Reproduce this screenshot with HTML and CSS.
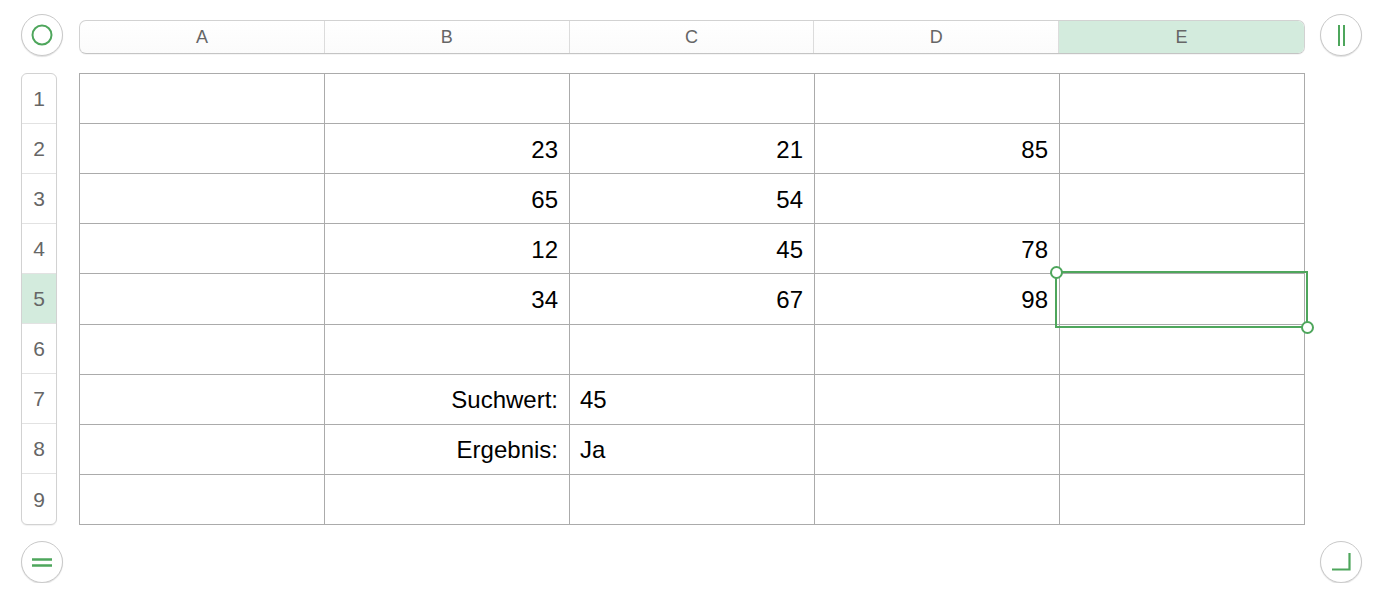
FILE: index.html
```html
<!DOCTYPE html>
<html lang="de">
<head>
<meta charset="utf-8">
<title>Tabelle</title>
<link rel="stylesheet" href="styles.css">
</head>
<body>
<div class="sheet">
  <div class="btn btn-tl">
    <svg width="42" height="42" viewBox="0 0 42 42"><circle cx="21" cy="21" r="9.5" fill="none" stroke="#4ea65c" stroke-width="2"/></svg>
  </div>
  <div class="colhead">
    <div class="ch">A</div>
    <div class="ch">B</div>
    <div class="ch">C</div>
    <div class="ch">D</div>
    <div class="ch ch-sel">E</div>
  </div>
  <div class="btn btn-tr">
    <svg width="42" height="42" viewBox="0 0 42 42"><path d="M19 11V32M24 11V32" stroke="#4ea65c" stroke-width="2" fill="none"/></svg>
  </div>

  <div class="rowhead">
    <div class="rh">1</div>
    <div class="rh">2</div>
    <div class="rh">3</div>
    <div class="rh">4</div>
    <div class="rh rh-sel">5</div>
    <div class="rh">6</div>
    <div class="rh">7</div>
    <div class="rh">8</div>
    <div class="rh">9</div>
  </div>
  <div class="tablewrap">
    <div class="grid">
      <div class="c"></div><div class="c"></div><div class="c"></div><div class="c"></div><div class="c"></div>
      <div class="c"></div><div class="c r">23</div><div class="c r">21</div><div class="c r">85</div><div class="c"></div>
      <div class="c"></div><div class="c r">65</div><div class="c r">54</div><div class="c"></div><div class="c"></div>
      <div class="c"></div><div class="c r">12</div><div class="c r">45</div><div class="c r">78</div><div class="c"></div>
      <div class="c"></div><div class="c r">34</div><div class="c r">67</div><div class="c r">98</div><div class="c"></div>
      <div class="c"></div><div class="c"></div><div class="c"></div><div class="c"></div><div class="c"></div>
      <div class="c"></div><div class="c r">Suchwert:</div><div class="c l">45</div><div class="c"></div><div class="c"></div>
      <div class="c"></div><div class="c r">Ergebnis:</div><div class="c l">Ja</div><div class="c"></div><div class="c"></div>
      <div class="c"></div><div class="c"></div><div class="c"></div><div class="c"></div><div class="c"></div>
    </div>
    <div class="selection">
      <span class="handle handle-tl"></span>
      <span class="handle handle-br"></span>
    </div>
  </div>

  <div class="btn btn-bl">
    <svg width="42" height="42" viewBox="0 0 42 42"><path d="M11 18.5H31M11 24.5H31" stroke="#4ea65c" stroke-width="2.4" fill="none"/></svg>
  </div>
  <div class="btn btn-br">
    <svg width="42" height="42" viewBox="0 0 42 42"><path d="M29.5 12V28.5H12" stroke="#4ea65c" stroke-width="2.2" fill="none"/></svg>
  </div>
</div>
</body>
</html>
```

FILE: styles.css
```css
* { box-sizing: border-box; }
html, body {
  margin: 0;
  padding: 0;
  background: #ffffff;
  font-family: "Liberation Sans", Arial, Helvetica, sans-serif;
}
.sheet {
  display: grid;
  grid-template-columns: 42px 16px 1226px 15px 42px;
  grid-template-rows: 42px 17px 452px 16px 42px;
  padding: 14px 0 0 21px;
}
.btn {
  width: 42px;
  height: 42px;
  border-radius: 50%;
  border: 1px solid #c9c9c9;
  background: #fff;
  box-shadow: 0 1px 1px rgba(0,0,0,0.12);
  position: relative;
}
.btn svg { position: absolute; left: -1px; top: -1px; }
.btn-tl { grid-column: 1; grid-row: 1; }
.btn-tr { grid-column: 5; grid-row: 1; }
.btn-bl { grid-column: 1; grid-row: 5; }
.btn-br { grid-column: 5; grid-row: 5; }

.colhead {
  grid-column: 3;
  grid-row: 1;
  margin-top: 6px;
  height: 34px;
  display: grid;
  grid-template-columns: repeat(5, 1fr);
  border: 1px solid #d2d2d2;
  border-bottom-color: #c4c4c4;
  border-radius: 7px;
  background: linear-gradient(#ffffff, #fbfbfb);
  overflow: hidden;
  box-shadow: 0 1px 0 rgba(0,0,0,0.04);
}
.ch {
  display: flex;
  align-items: center;
  justify-content: center;
  font-size: 18px;
  color: #666;
  border-right: 1px solid #dcdcdc;
  padding-top: 1px;
}
.ch:last-child { border-right: none; }
.ch-sel { background: #d3ebdd; }

.rowhead {
  grid-column: 1;
  grid-row: 3;
  width: 36px;
  display: grid;
  grid-template-rows: repeat(9, 1fr);
  border: 1px solid #d2d2d2;
  border-radius: 6px;
  overflow: hidden;
  background: #fff;
  box-shadow: 0 1px 1px rgba(0,0,0,0.06);
  height: 452px;
}
.rh {
  display: flex;
  align-items: center;
  justify-content: center;
  font-size: 21px;
  color: #666;
  border-bottom: 1px solid #e2e2e2;
  padding-top: 1px;
}
.rh:last-child { border-bottom: none; }
.rh-sel { background: #d3ebdd; }

.tablewrap {
  grid-column: 3;
  grid-row: 3;
  position: relative;
}
.grid {
  display: grid;
  grid-template-columns: repeat(5, 1fr);
  grid-template-rows: repeat(9, 1fr);
  border-left: 1px solid #ababab;
  border-top: 1px solid #ababab;
  width: 1226px;
  height: 452px;
}
.c {
  border-right: 1px solid #ababab;
  border-bottom: 1px solid #ababab;
  display: flex;
  align-items: center;
  font-size: 24px;
  color: #000;
  padding: 2px 11px 0 10px;
}
.c.r { justify-content: flex-end; }
.c.l { justify-content: flex-start; }

.selection {
  position: absolute;
  left: 976px;
  top: 198px;
  width: 253px;
  height: 57px;
  border: 2px solid #4ea65c;
}
.handle {
  position: absolute;
  width: 13px;
  height: 13px;
  border-radius: 50%;
  border: 2px solid #4ea65c;
  background: #fff;
}
.handle-tl { left: -7.5px; top: -7.5px; }
.handle-br { right: -7.5px; bottom: -7.5px; }
```
